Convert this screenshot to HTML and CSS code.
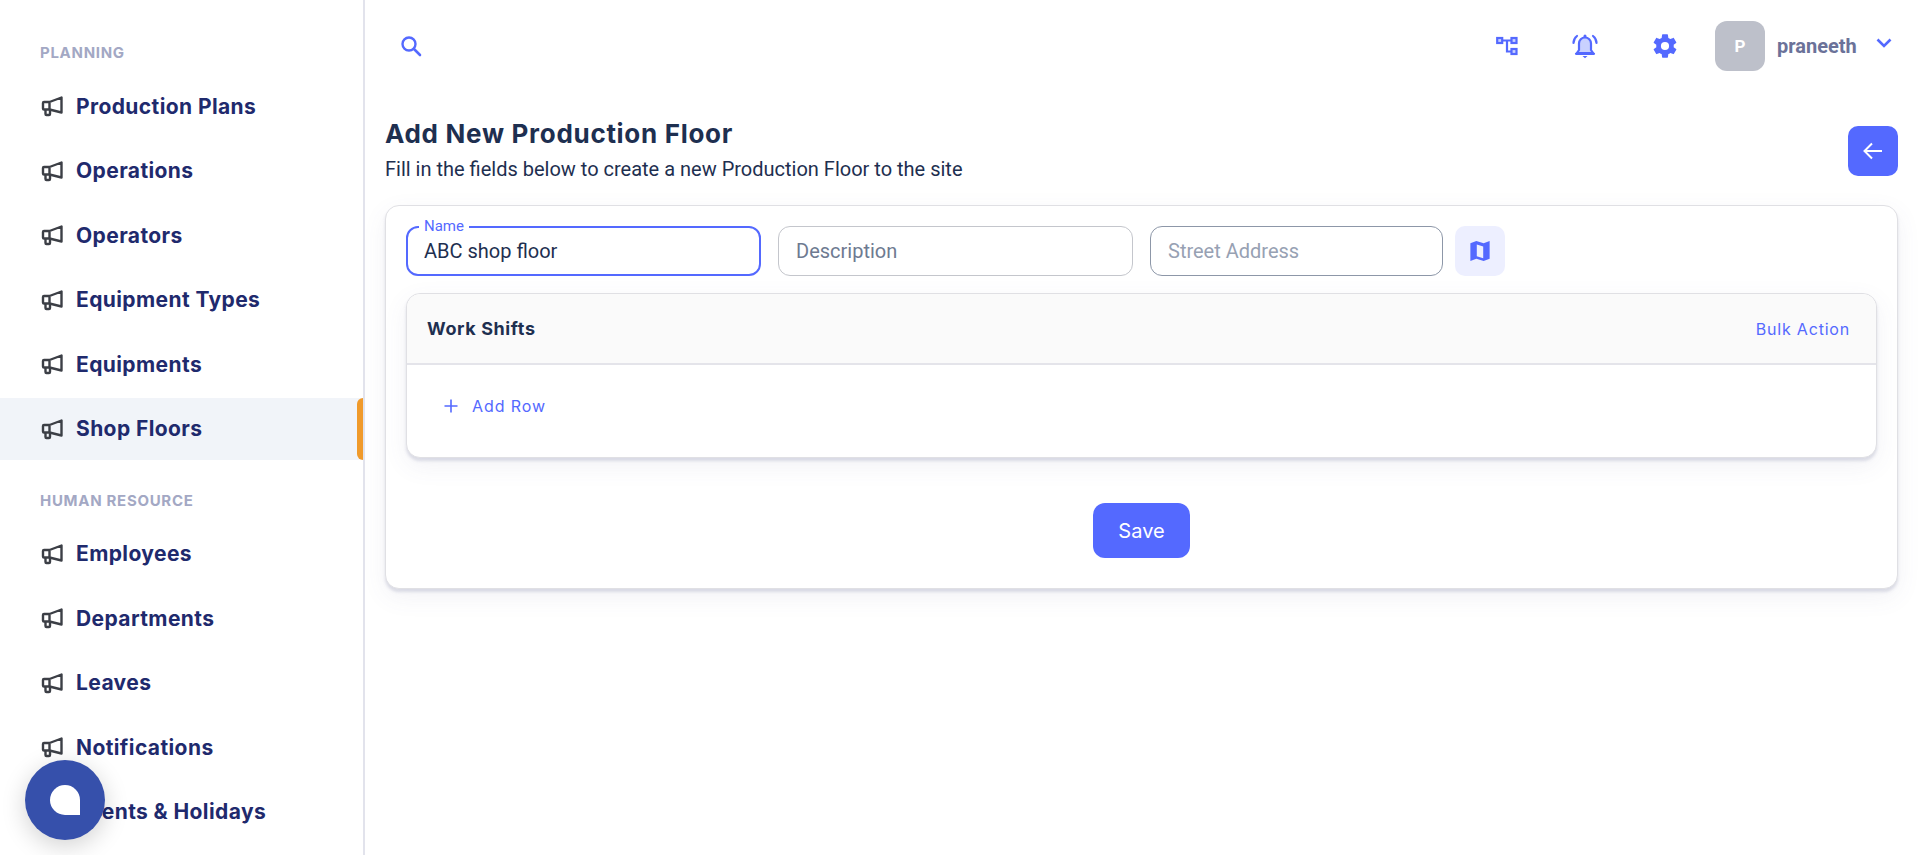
FILE: index.html
```html
<!DOCTYPE html>
<html lang="en">
<head>
  <meta charset="UTF-8">
  <meta name="viewport" content="width=device-width, initial-scale=1.0">
  <title>Add New Production Floor</title>
  <link rel="stylesheet" href="styles.css">
</head>
<body>
  <svg class="sprite" width="0" height="0">
    <symbol id="megaphone" viewBox="0 0 24 24">
      <path d="M21.500 3.500v15l-12-3H4a1 1 0 0 1-1-1V9a1 1 0 0 1 1-1h5.500zM9.500 8v7.500M5.500 15.500V20a1 1 0 0 0 1 1h2.500a1 1 0 0 0 1-1v-4.500" fill="none" stroke="currentColor" stroke-width="2.400" stroke-linejoin="round"/>
    </symbol>
  </svg>

  <aside class="sidebar">
    <div class="nav-label">PLANNING</div>
    <a class="nav-item"><svg class="nav-icon"><use href="#megaphone"/></svg>Production Plans</a>
    <a class="nav-item"><svg class="nav-icon"><use href="#megaphone"/></svg>Operations</a>
    <a class="nav-item"><svg class="nav-icon"><use href="#megaphone"/></svg>Operators</a>
    <a class="nav-item"><svg class="nav-icon"><use href="#megaphone"/></svg>Equipment Types</a>
    <a class="nav-item"><svg class="nav-icon"><use href="#megaphone"/></svg>Equipments</a>
    <a class="nav-item active"><svg class="nav-icon"><use href="#megaphone"/></svg>Shop Floors</a>
    <div class="nav-label second">HUMAN RESOURCE</div>
    <a class="nav-item"><svg class="nav-icon"><use href="#megaphone"/></svg>Employees</a>
    <a class="nav-item"><svg class="nav-icon"><use href="#megaphone"/></svg>Departments</a>
    <a class="nav-item"><svg class="nav-icon"><use href="#megaphone"/></svg>Leaves</a>
    <a class="nav-item"><svg class="nav-icon"><use href="#megaphone"/></svg>Notifications</a>
    <a class="nav-item"><svg class="nav-icon"><use href="#megaphone"/></svg>Events &amp; Holidays</a>
  </aside>

  <main class="main">
    <header class="topbar">
      <svg class="search-icon" viewBox="0 0 24 24"><circle cx="10" cy="10" r="6.500" fill="none" stroke="currentColor" stroke-width="2.400"/><path d="M15 15l6 6" stroke="currentColor" stroke-width="2.600" stroke-linecap="round"/></svg>
      <div class="topbar-right">
        <svg class="top-icon tree" viewBox="0 0 22 20"><g fill="#c9d1ff" stroke="currentColor" stroke-width="2.200"><rect x="1.200" y="2" width="5" height="5"/><rect x="15.500" y="2" width="5" height="5"/><rect x="15.500" y="13" width="5" height="5"/></g><path d="M6 4.500h9.500M11 4.500V15.500h4.500" fill="none" stroke="currentColor" stroke-width="2.200"/></svg>
        <svg class="top-icon bell" viewBox="0 0 26 26"><path d="M13 4.500a6 6 0 0 0-6 6V17l-2 3h16l-2-3v-6.500a6 6 0 0 0-6-6z" fill="#c9d1ff" stroke="currentColor" stroke-width="2.200"/><path d="M4 20.800h18" stroke="currentColor" stroke-width="2.200" stroke-linecap="round"/><path d="M10.500 23h5l-2.500 2.200zM11.500 3a1.500 1.500 0 0 1 3 0v2h-3z" fill="currentColor"/><path d="M1.500 10a9 9 0 0 1 3.500-7M24.500 10a9 9 0 0 0-3.500-7" fill="none" stroke="currentColor" stroke-width="2.200" stroke-linecap="round"/></svg>
        <svg class="top-icon gear" viewBox="0 0 24 24"><path fill="currentColor" fill-rule="evenodd" d="M19.430 12.980c.04-.32.070-.64.070-.98s-.030-.66-.070-.98l2.110-1.650c.19-.15.240-.42.120-.64l-2-3.460c-.12-.22-.39-.30-.61-.22l-2.490 1c-.52-.40-1.080-.73-1.690-.98l-.38-2.650C14.460 2.180 14.250 2 14 2h-4c-.25 0-.46.180-.49.420l-.38 2.650c-.61.25-1.170.59-1.690.98l-2.490-1c-.23-.09-.49 0-.61.220l-2 3.460c-.13.220-.07.490.12.640l2.110 1.650c-.04.32-.07.650-.07.980s.030.660.070.980l-2.110 1.650c-.19.150-.24.420-.12.640l2 3.460c.12.220.39.300.61.220l2.490-1c.52.400 1.080.730 1.690.980l.38 2.650c.03.240.24.420.49.420h4c.25 0 .46-.180.49-.420l.38-2.650c.61-.250 1.170-.590 1.690-.980l2.490 1c.23.090.49 0 .61-.220l2-3.460c.12-.220.070-.490-.12-.640l-2.110-1.650zM12 15.500a3.500 3.500 0 1 1 0-7 3.500 3.500 0 0 1 0 7z"/></svg>
        <div class="user">
          <div class="avatar">P</div>
          <span class="user-name">praneeth</span>
          <svg class="chevron" viewBox="0 0 16 10"><path d="M1.500 1.500L8 8l6.500-6.500" fill="none" stroke="currentColor" stroke-width="2.600"/></svg>
        </div>
      </div>
    </header>

    <section class="page-head">
      <div>
        <h1>Add New Production Floor</h1>
        <p>Fill in the fields below to create a new Production Floor to the site</p>
      </div>
      <button class="back-btn" type="button"><svg viewBox="0 0 24 24"><path d="M21 12H4M11 4.500L3.500 12l7.500 7.500" fill="none" stroke="currentColor" stroke-width="2"/></svg></button>
    </section>

    <form class="card">
      <div class="fields">
        <div class="field name-field">
          <label for="name">Name</label>
          <input id="name" type="text" value="ABC shop floor">
        </div>
        <div class="field desc-field"><input type="text" placeholder="Description"></div>
        <div class="field street-field"><input type="text" placeholder="Street Address"></div>
        <button class="map-btn" type="button"><svg viewBox="0 0 24 24"><path fill="currentColor" fill-rule="evenodd" d="M1.500 3.500L8 1l8 2.500L22.500 1v19.500L16 23l-8-2.500-6.500 2.500zM8.500 5v12.800l7 2.200V7.200z"/></svg></button>
      </div>

      <div class="shifts">
        <div class="shifts-head">
          <span class="shifts-title">Work Shifts</span>
          <a class="bulk">Bulk Action</a>
        </div>
        <div class="shifts-body">
          <a class="add-row"><svg viewBox="0 0 14 14"><path d="M7 0.500v13M0.500 7h13" stroke="currentColor" stroke-width="1.600"/></svg>Add Row</a>
        </div>
      </div>

      <div class="actions">
        <button class="save-btn" type="button">Save</button>
      </div>
    </form>
  </main>

  <div class="chat"><span class="chat-dot"></span></div>
</body>
</html>
```

FILE: styles.css
```css
/* General Styles */
* {
  box-sizing: border-box;
}

html,
body {
  height: 100%;
}

body {
  margin: 0;
  display: flex;
  overflow: hidden;
  background: #fff;
  font-family: Roboto, sans-serif;
  color: #1e2f50;
}

.sprite {
  position: absolute;
}

/* Sidebar */
.sidebar {
  width: 365px;
  height: 855px;
  flex-shrink: 0;
  overflow: hidden;
  padding-top: 43px;
  border-right: 2px solid #e2e3ec;
}

.nav-label {
  height: 20px;
  line-height: 20px;
  margin: 0 0 12px 40px;
  font-family: Inter, sans-serif;
  font-size: 15px;
  font-weight: 700;
  letter-spacing: 0.700px;
  color: #a3a8c4;
}

.nav-label.second {
  margin-top: 31px;
}

.nav-item {
  display: flex;
  align-items: center;
  height: 62px;
  margin-bottom: 2.500px;
  padding-left: 40px;
  font-family: Inter, sans-serif;
  font-size: 21px;
  font-weight: 700;
  letter-spacing: 0.400px;
  color: #1f2a6d;
}

.nav-item.active {
  position: relative;
  background: #f1f4f9;
}

.nav-item.active::after {
  content: "";
  position: absolute;
  top: 0;
  right: 0;
  width: 6px;
  height: 100%;
  background: #f09a2b;
  border-radius: 6px 0 0 6px;
}

.nav-icon {
  width: 24px;
  height: 24px;
  margin-right: 12px;
  color: #3c3f46;
}

/* Top Bar */
.main {
  flex: 1;
  min-width: 0;
  padding: 0 22px 0 20px;
}

.topbar {
  display: flex;
  align-items: center;
  justify-content: space-between;
  height: 92px;
  padding-left: 14px;
}

.search-icon {
  width: 24px;
  height: 24px;
  color: #5469ff;
}

.topbar-right {
  display: flex;
  align-items: center;
  color: #5469ff;
}

.top-icon {
  flex-shrink: 0;
}

.tree {
  width: 22px;
  height: 20px;
  margin-right: 54px;
}

.bell {
  width: 26px;
  height: 26px;
  margin-right: 53px;
}

.gear {
  width: 28px;
  height: 28px;
  margin-right: 36px;
}

.user {
  display: flex;
  align-items: center;
  width: 183px;
}

.avatar {
  width: 50px;
  height: 50px;
  display: flex;
  align-items: center;
  justify-content: center;
  background: #bdc0ca;
  border-radius: 12px;
  font-size: 17px;
  font-weight: 700;
  color: #fff;
}

.user-name {
  margin-left: 12px;
  font-size: 20px;
  font-weight: 700;
  color: #6b7299;
}

.chevron {
  width: 16px;
  height: 10px;
  margin: -7px 0 0 19px;
  color: #5469ff;
}

/* Page Heading */
.page-head {
  display: flex;
  align-items: flex-start;
  justify-content: space-between;
  padding-top: 27px;
  margin-bottom: 24px;
}

.page-head h1 {
  margin: 0 0 8px;
  font-family: Inter, sans-serif;
  font-size: 26px;
  line-height: 30px;
  font-weight: 700;
  letter-spacing: 0.700px;
  color: #1e2f50;
}

.page-head p {
  margin: 0;
  font-size: 20px;
  line-height: 24px;
  color: #1e2f50;
}

.back-btn {
  width: 50px;
  height: 50px;
  margin-top: 7px;
  padding: 13px;
  border: none;
  border-radius: 10px;
  background: #5469ff;
  color: #fff;
}

.back-btn svg {
  display: block;
  width: 24px;
  height: 24px;
}

/* Form Card */
.card {
  height: 384px;
  padding: 20px;
  background: #fff;
  border: 1px solid #e0e0e4;
  border-radius: 14px;
  box-shadow: 0 3px 3px rgba(90, 95, 140, 0.18), 0 8px 24px rgba(90, 95, 140, 0.08);
}

.fields {
  display: flex;
  align-items: flex-start;
  gap: 17px;
}

.field {
  position: relative;
  height: 50px;
}

.field input {
  width: 100%;
  height: 100%;
  padding: 0 17px;
  border: 1px solid #c4c6cc;
  border-radius: 12px;
  outline: none;
  background: #fff;
  font-family: Roboto, sans-serif;
  font-size: 20px;
  color: #1e2f50;
}

.field input::placeholder {
  color: #6e7a91;
}

.name-field,
.desc-field {
  width: 355px;
}

.street-field {
  width: 293px;
}

.street-field input {
  border-color: #8d97a8;
}

.street-field input::placeholder {
  color: #97a1b3;
}

.name-field input {
  border: 2px solid #5469ff;
  padding: 0 16px;
}

.name-field label {
  position: absolute;
  top: -7px;
  left: 13px;
  padding: 0 5px;
  background: #fff;
  font-size: 15px;
  line-height: 14px;
  color: #5469ff;
}

.map-btn {
  width: 50px;
  height: 50px;
  margin-left: -5px;
  padding: 14px;
  border: none;
  border-radius: 10px;
  background: #edefff;
  color: #5469ff;
}

.map-btn svg {
  display: block;
  width: 22px;
  height: 22px;
}

/* Work Shifts */
.shifts {
  height: 165px;
  margin-top: 17px;
  background: #fff;
  border: 1px solid #e0e0e4;
  border-radius: 14px;
  box-shadow: 0 3px 3px rgba(90, 95, 140, 0.18), 0 8px 24px rgba(90, 95, 140, 0.08);
}

.shifts-head {
  display: flex;
  align-items: center;
  justify-content: space-between;
  height: 71px;
  padding: 0 26px 0 20px;
  background: #fafafa;
  border-bottom: 2px solid #e4e4ea;
  border-radius: 14px 14px 0 0;
}

.shifts-title {
  font-family: Inter, sans-serif;
  font-size: 18px;
  font-weight: 700;
  letter-spacing: 0.600px;
  color: #1e2f50;
}

.bulk {
  font-family: Inter, sans-serif;
  font-size: 16px;
  letter-spacing: 0.800px;
  color: #5469ff;
}

.shifts-body {
  padding: 31px 0 0 37px;
}

.add-row {
  display: flex;
  align-items: center;
  font-family: Inter, sans-serif;
  font-size: 16px;
  letter-spacing: 0.900px;
  color: #5469ff;
}

.add-row svg {
  width: 14px;
  height: 14px;
  margin-right: 14px;
}

.actions {
  display: flex;
  justify-content: center;
  margin-top: 45px;
}

.save-btn {
  width: 97px;
  height: 55px;
  border: none;
  border-radius: 12px;
  background: #5469ff;
  font-family: Inter, sans-serif;
  font-size: 20px;
  color: #fff;
}

/* Chat Bubble */
.chat {
  position: fixed;
  left: 25px;
  top: 760px;
  width: 80px;
  height: 80px;
  display: flex;
  align-items: center;
  justify-content: center;
  border-radius: 50%;
  background: #3650ab;
  box-shadow: 0 6px 24px rgba(0, 0, 0, 0.18);
}

.chat-dot {
  width: 30px;
  height: 30px;
  background: #fff;
  border-radius: 50% 50% 0 50%;
}
```
